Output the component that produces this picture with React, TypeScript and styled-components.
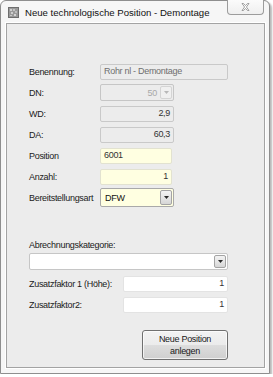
import styled, { createGlobalStyle } from "styled-components";

const GlobalStyle = createGlobalStyle`
  html, body {
    margin: 0;
    padding: 0;
    background: #ffffff;
  }
  body {
    font-family: "Liberation Sans", Arial, sans-serif;
  }
`;

function AppIcon() {
  return (
    <svg width="11" height="11" viewBox="0 0 11 11">
      <rect x="0.5" y="0.5" width="10" height="10" fill="#9a9a9a" stroke="#6e6e6e" />
      <rect x="2" y="2" width="2" height="2" fill="#d0d0d0" />
      <rect x="5" y="2" width="2" height="2" fill="#c4c4c4" />
      <rect x="3" y="5" width="2" height="2" fill="#cfcfcf" />
      <rect x="7" y="4" width="2" height="2" fill="#bdbdbd" />
      <rect x="2" y="8" width="2" height="1" fill="#c8c8c8" />
      <rect x="6" y="7" width="2" height="2" fill="#d4d4d4" />
    </svg>
  );
}

function CloseGlyph() {
  return (
    <svg width="9" height="8" viewBox="0 0 9 8">
      <path
        d="M1 0.5 L2.5 0.5 L4.5 2.6 L6.5 0.5 L8 0.5 L5.4 4 L8 7.5 L6.5 7.5 L4.5 5.4 L2.5 7.5 L1 7.5 L3.6 4 Z"
        fill="#ffffff"
        stroke="#8a8a8a"
        strokeWidth="0.8"
      />
    </svg>
  );
}

function Arrow({ disabled }: { disabled?: boolean }) {
  return (
    <svg width="5" height="3" viewBox="0 0 5 3">
      <path d="M0 0 L5 0 L2.5 3 Z" fill={disabled ? "#b8b8b8" : "#2a2a2a"} />
    </svg>
  );
}

function App() {
  return (
    <>
      <GlobalStyle />
      <Window>
        <TitleBar>
          <AppIcon />
          <Title>Neue technologische Position - Demontage</Title>
          <CloseButton>
            <CloseGlyph />
          </CloseButton>
        </TitleBar>
        <Client>
          <Form>
            <Row>
              <Label>Benennung:</Label>
              <Field $width={128} $tone="disabled" $muted>
                Rohr nl - Demontage
              </Field>
            </Row>
            <Row>
              <Label>DN:</Label>
              <Combo $width={74} $tone="disabled">
                <ComboValue $right $faint>
                  50
                </ComboValue>
                <DropButton $disabled>
                  <Arrow disabled />
                </DropButton>
              </Combo>
            </Row>
            <Row>
              <Label>WD:</Label>
              <Field $width={74} $tone="disabled" $right>
                2,9
              </Field>
            </Row>
            <Row>
              <Label>DA:</Label>
              <Field $width={74} $tone="disabled" $right>
                60,3
              </Field>
            </Row>
            <Row>
              <Label>Position</Label>
              <Field $width={72} $tone="required">
                6001
              </Field>
            </Row>
            <Row>
              <Label>Anzahl:</Label>
              <Field $width={72} $tone="required" $right>
                1
              </Field>
            </Row>
            <Row>
              <Label>Bereitstellungsart</Label>
              <Combo $width={74} $tone="required" $tall>
                <ComboValue>DFW</ComboValue>
                <DropButton>
                  <Arrow />
                </DropButton>
              </Combo>
            </Row>

            <Section>
              <Label>Abrechnungskategorie:</Label>
              <Combo $width={199} $tone="plain">
                <ComboValue />
                <DropButton>
                  <Arrow />
                </DropButton>
              </Combo>
            </Section>

            <WideRow>
              <Label>Zusatzfaktor 1 (Höhe):</Label>
              <Field $width={105} $tone="plain" $right>
                1
              </Field>
            </WideRow>
            <WideRow>
              <Label>Zusatzfaktor2:</Label>
              <Field $width={105} $tone="plain" $right>
                1
              </Field>
            </WideRow>

            <Actions>
              <Button>
                Neue Position
                <br />
                anlegen
              </Button>
            </Actions>
          </Form>
        </Client>
      </Window>
    </>
  );
}
export default App;

const Window = styled.div`
  box-sizing: border-box;
  width: 270px;
  height: 374px;
  border: 1px solid #8e8e8e;
  border-radius: 6px 6px 0 0;
  background: #f6f6f6;
  box-shadow: 2px 2px 2px rgba(0, 0, 0, 0.28);
  padding: 0 4px 5px 5px;
  display: flex;
  flex-direction: column;
`;

const TitleBar = styled.div`
  height: 22px;
  display: flex;
  align-items: center;
  padding-left: 2px;
  position: relative;
`;

const Title = styled.span`
  font-family: "Liberation Sans", Arial, sans-serif;
  font-size: 9.6px;
  color: #111;
  margin-left: 6px;
  white-space: nowrap;
`;

const CloseButton = styled.div`
  position: absolute;
  top: -1px;
  right: 1px;
  width: 37px;
  height: 15px;
  box-sizing: border-box;
  border: 1px solid #9c9c9c;
  border-top: none;
  border-radius: 0 0 4px 4px;
  background: linear-gradient(#fbfbfb, #efefef);
  display: flex;
  align-items: center;
  justify-content: center;
`;

const Client = styled.div`
  flex: 1;
  border: 1px solid #a3a3a3;
  box-shadow: 0 0 0 1px #ffffff;
  background: #ececec;
  padding: 37px 0 0 22px;
`;

const Form = styled.div`
  width: 199px;
  display: flex;
  flex-direction: column;
  font-size: 9px;
  letter-spacing: -0.3px;
  color: #1a1a1a;
`;

const Row = styled.div`
  height: 21px;
  display: grid;
  grid-template-columns: 71px auto;
  align-items: center;
`;

const WideRow = styled(Row)`
  grid-template-columns: 94px auto;
`;

const Section = styled.div`
  margin-top: 32px;
  display: flex;
  flex-direction: column;
  gap: 3px;
  margin-bottom: 3px;
`;

const Label = styled.span`
  white-space: nowrap;
`;

type Tone = "disabled" | "required" | "plain";

const toneBg: Record<Tone, string> = {
  disabled: "#ececec",
  required: "#ffffe1",
  plain: "#ffffff",
};

const toneBorder: Record<Tone, string> = {
  disabled: "#c9c9c9",
  required: "#e2e2d0",
  plain: "#e3e3e3",
};

const Field = styled.div<{
  $width: number;
  $tone: Tone;
  $right?: boolean;
  $muted?: boolean;
}>`
  box-sizing: border-box;
  width: ${(p) => p.$width}px;
  height: 16px;
  border: 1px solid ${(p) => toneBorder[p.$tone]};
  border-radius: 2px;
  background: ${(p) => toneBg[p.$tone]};
  color: ${(p) => (p.$muted ? "#6f6f6f" : "#333")};
  display: flex;
  align-items: center;
  justify-content: ${(p) => (p.$right ? "flex-end" : "flex-start")};
  padding: 0 3px;
  line-height: 1;
`;

const Combo = styled.div<{ $width: number; $tone: Tone; $tall?: boolean }>`
  box-sizing: border-box;
  width: ${(p) => p.$width}px;
  height: ${(p) => (p.$tall ? 19 : 17)}px;
  border: 1px solid ${(p) => (p.$tone === "required" ? "#a9a9a9" : "#c6c6c6")};
  border-radius: 2px;
  background: ${(p) => toneBg[p.$tone]};
  display: flex;
  align-items: center;
  padding: 1px;
`;

const ComboValue = styled.span<{ $right?: boolean; $faint?: boolean }>`
  flex: 1;
  padding: 0 3px;
  text-align: ${(p) => (p.$right ? "right" : "left")};
  color: ${(p) => (p.$faint ? "#a8a8a8" : "#111")};
  font-size: 9px;
`;

const DropButton = styled.div<{ $disabled?: boolean }>`
  box-sizing: border-box;
  width: 12px;
  align-self: stretch;
  border: 1px solid ${(p) => (p.$disabled ? "#d4d4d4" : "#a4a4a4")};
  border-radius: 2px;
  background: ${(p) =>
    p.$disabled ? "#f0f0f0" : "linear-gradient(#f3f3f3 0%, #e6e6e6 50%, #d6d6d6 100%)"};
  display: flex;
  align-items: center;
  justify-content: center;
`;

const Actions = styled.div`
  display: flex;
  justify-content: flex-end;
  margin-top: 15px;
`;

const Button = styled.div`
  box-sizing: border-box;
  width: 86px;
  height: 30px;
  border: 1px solid #707070;
  border-radius: 3px;
  background: linear-gradient(#f2f2f2 0%, #ebebeb 50%, #dddddd 51%, #cfcfcf 100%);
  box-shadow: inset 0 0 0 1px rgba(255, 255, 255, 0.7);
  display: flex;
  align-items: center;
  justify-content: center;
  text-align: center;
  font-size: 9px;
  line-height: 12px;
  color: #1a1a1a;
`;
